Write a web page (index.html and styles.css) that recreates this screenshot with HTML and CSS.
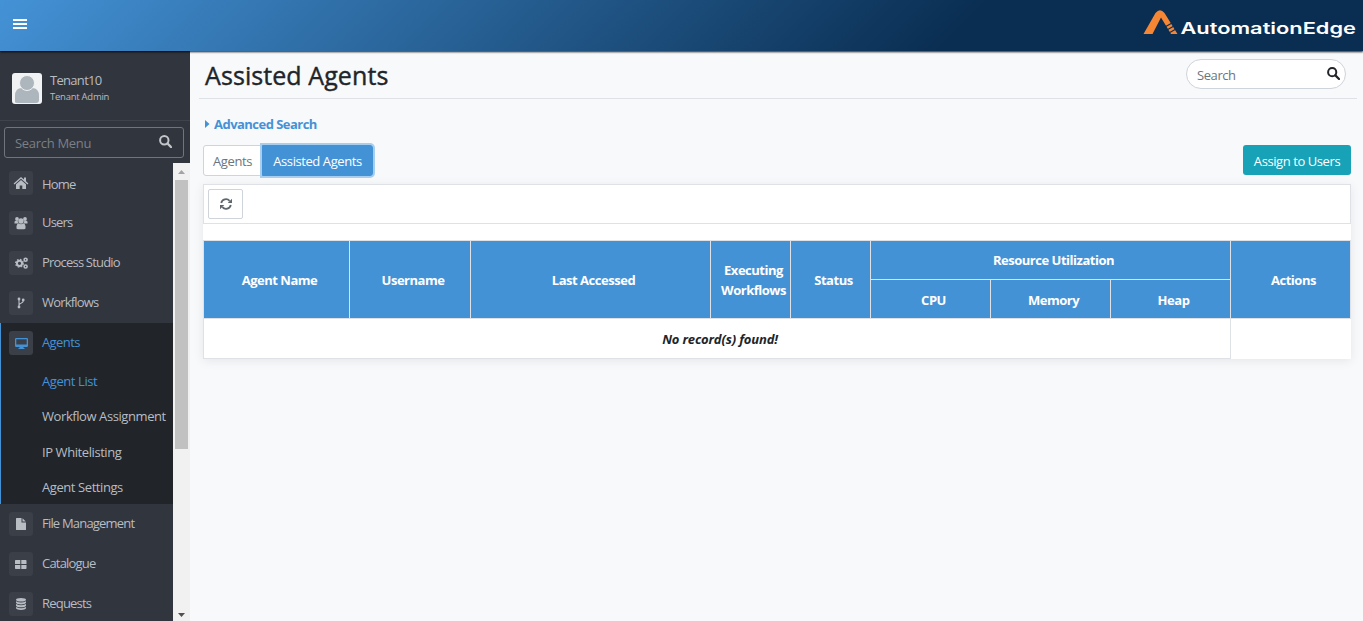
FILE: index.html
```html
<!DOCTYPE html>
<html lang="en">
<head>
    <meta charset="UTF-8">
    <meta name="viewport" content="width=device-width, initial-scale=1.0">
    <title>Assisted Agents</title>
    <link rel="stylesheet" href="styles.css">
</head>
<body>
    <header class="topbar">
        <button class="menu-toggle" aria-label="Toggle menu">
            <svg width="14" height="12" viewBox="0 0 14 12"><path d="M0 1h14v2H0zM0 5h14v2H0zM0 9h14v2H0z" fill="#fff"/></svg>
        </button>
        <svg class="logo" width="216" height="32" viewBox="0 0 216 32">
            <path d="M.500 25 12.500 4Q17-1.500 21.500 4L34.500 25H28L18 8.500 9.500 25Z" fill="#f58634"/>
            <path d="M21 18.500 29 14M23 21.500 31 17M25 24.500 33 20" stroke="#0a2e52" stroke-width="1.100"/>
            <text class="logo-text" x="37.500" y="25" textLength="175.500" lengthAdjust="spacingAndGlyphs">AutomationEdge</text>
        </svg>
    </header>

    <div class="layout">
        <aside class="sidebar">
            <div class="user">
                <svg class="avatar" width="30" height="31" viewBox="0 0 30 31">
                    <rect width="30" height="31" rx="3" fill="#f1f2f3"/>
                    <path d="M3 29V23Q3 15 10 15H20Q27 15 27 23V27Q27 30 24 30H6Q3 30 3 29Z" fill="#adb5bd"/>
                    <circle cx="15" cy="10" r="7.500" fill="#adb5bd" stroke="#f1f2f3"/>
                </svg>
                <div class="user-info">
                    <span class="user-name">Tenant10</span>
                    <span class="user-role">Tenant Admin</span>
                </div>
            </div>
            <div class="menu-search">
                <span>Search Menu</span>
                <svg width="13" height="13" viewBox="0 0 13 13"><circle cx="5.300" cy="5.300" r="4.200" fill="none" stroke="#c3c5c9" stroke-width="2"/><path d="M8.500 8.500 12 12" stroke="#c3c5c9" stroke-width="2.400" stroke-linecap="round"/></svg>
            </div>
            <div class="menu-wrap">
                <ul class="menu">
                    <li><a class="home" href="#"><i class="icon"><svg width="16" height="14" viewBox="0 0 16 14"><path d="M8 1 .600 7.400l.900 1L8 2.800l6.500 5.600.900-1L13 5.300V1.500h-2v2.100z"/><path d="M8 4 3 8.300V13h3.700V9.500h2.600V13H13V8.300z"/></svg></i><span>Home</span></a></li>
                    <li><a class="users" href="#"><i class="icon"><svg width="14" height="14" viewBox="0 0 14 14"><circle cx="3" cy="3" r="1.900"/><circle cx="11" cy="3" r="1.900"/><circle cx="7" cy="5" r="2.700"/><path d="M.500 7.500V5.500Q1.500 4.500 3.800 5 3.800 6.500 4.600 7.500zM13.500 7.500V5.500Q12.500 4.500 10.200 5 10.200 6.500 9.400 7.500zM2.500 12.500V10Q3 7.500 5 7.600 7 9 9 7.600 11 7.500 11.500 10v2.500q-.500.800-1.500.800H4q-1 0-1.500-.800z"/></svg></i><span>Users</span></a></li>
                    <li><a href="#"><i class="icon"><svg width="13" height="12" viewBox="0 0 13 12"><circle cx="4.500" cy="6.300" r="2.600" fill="none" stroke="currentColor" stroke-width="2"/><circle cx="4.500" cy="6.300" r="3.900" fill="none" stroke="currentColor" stroke-width="1.200" stroke-dasharray="1.600 1.463"/><circle cx="10.600" cy="2.700" r="1.500" fill="none" stroke="currentColor" stroke-width="1.600"/><circle cx="10.600" cy="9.500" r="1.500" fill="none" stroke="currentColor" stroke-width="1.600"/></svg></i><span>Process Studio</span></a></li>
                    <li><a href="#"><i class="icon"><svg width="8" height="12" viewBox="0 0 8 12"><path d="M2 2v8M6.300 2.500v1.300Q6.300 5.500 4 6.200 2 6.700 2 8.500" fill="none" stroke="currentColor" stroke-width="1.100"/><circle cx="2" cy="2" r="1.400"/><circle cx="6.200" cy="3" r="1.400"/><circle cx="2" cy="10" r="1.400"/></svg></i><span>Workflows</span></a></li>
                    <li class="active">
                        <a href="#"><i class="icon"><svg width="13" height="11" viewBox="0 0 13 11"><path d="M1.200 0h10.600Q13 0 13 1.200v6.600Q13 9 11.800 9H8.500v1H9.500v1h-6v-1h1V9H1.200Q0 9 0 7.800V1.200Q0 0 1.200 0zM1.300 1.300v5.200h10.400V1.300z" fill-rule="evenodd"/></svg></i><span>Agents</span></a>
                        <ul class="submenu">
                            <li class="current">Agent List</li>
                            <li>Workflow Assignment</li>
                            <li>IP Whitelisting</li>
                            <li>Agent Settings</li>
                        </ul>
                    </li>
                    <li><a href="#"><i class="icon"><svg width="10" height="12" viewBox="0 0 10 12"><path d="M.500 0H5.500V4.500H10V11.500Q10 12 9.500 12H.500Q0 12 0 11.500V.500Q0 0 .500 0zM6.500.200 9.800 3.500H6.500z"/></svg></i><span>File Management</span></a></li>
                    <li><a href="#"><i class="icon"><svg width="12" height="9" viewBox="0 0 12 9"><path d="M.700 0h4.600v4H0V.700Q0 0 .700 0zM6.300 0h4.500Q11.500 0 11.500.700V4H6.300zM0 5h5.300v4H.700Q0 9 0 8.300zM6.300 5h5.200v3.300q0 .700-.700.700H6.300z"/></svg></i><span>Catalogue</span></a></li>
                    <li><a href="#"><i class="icon"><svg width="10" height="12" viewBox="0 0 10 12"><ellipse cx="5" cy="1.800" rx="5" ry="1.800"/><path d="M0 3.200Q5 5.700 10 3.200v1.600Q9 6.500 5 6.500T0 4.800zM0 6.100Q5 8.600 10 6.100v1.600Q9 9.300 5 9.300T0 7.700zM0 9Q5 11.500 10 9v1.300Q9 12 5 12T0 10.300z"/></svg></i><span>Requests</span></a></li>
                </ul>
                <div class="scrollbar">
                    <svg width="7" height="4" viewBox="0 0 7 4"><path d="M0 4 3.500 0 7 4z" fill="#a3a3a3"/></svg>
                    <div class="thumb"></div>
                    <svg width="7" height="4" viewBox="0 0 7 4"><path d="M0 0h7L3.500 4z" fill="#505050"/></svg>
                </div>
            </div>
        </aside>

        <main class="content">
            <div class="page-head">
                <h1>Assisted Agents</h1>
                <div class="search">
                    <span>Search</span>
                    <svg width="13" height="13" viewBox="0 0 13 13"><circle cx="5.200" cy="5.200" r="4.100" fill="none" stroke="#212529" stroke-width="2"/><path d="M8.400 8.400 12 12" stroke="#212529" stroke-width="2.200" stroke-linecap="round"/></svg>
                </div>
            </div>
            <div class="body">
                <a class="advanced" href="#">
                    <svg width="5" height="8" viewBox="0 0 5 8"><path d="M0 0 4.500 4 0 8z" fill="#4492d6"/></svg>
                    <span>Advanced Search</span>
                </a>
                <div class="actions">
                    <div class="tabs">
                        <button class="tab">Agents</button>
                        <button class="tab selected">Assisted Agents</button>
                    </div>
                    <button class="assign">Assign to Users</button>
                </div>
                <div class="card">
                    <div class="toolbar">
                        <button class="refresh" aria-label="Refresh">
                            <svg width="12" height="12" viewBox="0 0 12 12"><path d="M1.200 5A4.900 4.900 0 0 1 9.600 2.800M10.800 7A4.900 4.900 0 0 1 2.400 9.200" fill="none" stroke="#5f676e" stroke-width="1.800"/><path d="M12 .700V5H7.700zM0 11.300V7h4.300z" fill="#5f676e"/></svg>
                        </button>
                    </div>
                    <table>
                        <colgroup>
                            <col class="c-name"><col class="c-user"><col class="c-last"><col class="c-small"><col class="c-small"><col><col><col><col>
                        </colgroup>
                        <thead>
                            <tr>
                                <th rowspan="2">Agent Name</th>
                                <th rowspan="2">Username</th>
                                <th rowspan="2">Last Accessed</th>
                                <th rowspan="2">Executing<br>Workflows</th>
                                <th rowspan="2">Status</th>
                                <th colspan="3">Resource Utilization</th>
                                <th rowspan="2">Actions</th>
                            </tr>
                            <tr class="sub-head">
                                <th>CPU</th>
                                <th>Memory</th>
                                <th>Heap</th>
                            </tr>
                        </thead>
                        <tbody>
                            <tr>
                                <td colspan="8">No record(s) found!</td>
                                <td class="blank"></td>
                            </tr>
                        </tbody>
                    </table>
                </div>
            </div>
        </main>
    </div>
</body>
</html>
```
FILE: styles.css
```css
* {
    margin: 0;
    padding: 0;
    box-sizing: border-box;
}

body {
    height: 100vh;
    overflow: hidden;
    background: #f8f9fb;
    color: #212529;
    font-family: "Open Sans", "Noto Sans", sans-serif;
    font-size: 13px;
    letter-spacing: -0.42px;
}

button {
    font: inherit;
    letter-spacing: inherit;
}

a {
    text-decoration: none;
}

ul {
    list-style: none;
}

svg {
    display: block;
    flex-shrink: 0;
}

/* top bar */
.topbar {
    position: relative;
    z-index: 2;
    display: flex;
    align-items: center;
    justify-content: space-between;
    height: 51px;
    padding: 0 4px 0 13px;
    background: linear-gradient(135deg, #4492d6 0%, #0a2e52 70%);
    box-shadow: 0 1px 2px rgba(0, 0, 0, 0.9);
}

.menu-toggle {
    border: 0;
    background: none;
    padding-bottom: 3px;
}

.logo {
    margin-bottom: 1px;
}

.logo-text {
    font-family: Inter, sans-serif;
    font-size: 16px;
    font-weight: 600;
    letter-spacing: 0;
    fill: #fff;
}

.layout {
    display: flex;
    height: calc(100vh - 51px);
}

/* sidebar */
.sidebar {
    display: flex;
    flex-direction: column;
    flex: 0 0 190px;
    background: #31353d;
    color: #b8bcc3;
}

.user {
    display: flex;
    height: 70px;
    padding: 22px 12px 0;
    border-bottom: 1px solid #3e434c;
}

.user-info {
    display: flex;
    flex-direction: column;
    padding-left: 8px;
}

.user-name {
    line-height: 14px;
    padding-bottom: 2px;
    letter-spacing: -0.7px;
}

.user-role {
    font-size: 9.5px;
    line-height: 16px;
    letter-spacing: -0.25px;
}

.menu-search {
    display: flex;
    align-items: center;
    justify-content: space-between;
    height: 31px;
    margin: 6px 6px 5px 4px;
    padding: 0 11px 0 10px;
    border: 1px solid #70757d;
    border-radius: 3px;
    color: #7b8087;
    letter-spacing: -0.3px;
}

.menu-search svg {
    margin-bottom: 2px;
}

.menu-wrap {
    display: flex;
    flex: 1;
    min-height: 0;
}

.menu {
    width: 173px;
    overflow: hidden;
}

.menu a {
    display: flex;
    align-items: center;
    height: 40px;
    padding-left: 9px;
    color: inherit;
    letter-spacing: -0.8px;
}

.menu a span {
    padding-bottom: 3px;
}

.menu .home span {
    padding: 2px 0 0;
}

.active a span {
    letter-spacing: -0.6px;
}

.icon {
    display: flex;
    align-items: center;
    justify-content: center;
    width: 24px;
    height: 24px;
    margin-right: 9px;
    border-radius: 3px;
    background: #3a3f48;
}

.icon svg {
    fill: currentColor;
}

.active {
    background: #212529;
    box-shadow: inset 1px 0 #4492d6;
}

.active > a {
    color: #4492d6;
}

.submenu li {
    height: 35.25px;
    padding-left: 42px;
    line-height: 36px;
    color: #b8bcc3;
    white-space: nowrap;
}

.submenu .current {
    color: #4492d6;
}

.scrollbar {
    display: flex;
    flex-direction: column;
    align-items: center;
    width: 17px;
    padding: 7px 0 4px;
    background: #f1f1f1;
}

.thumb {
    width: 13px;
    height: 269px;
    margin: 6px 0 auto;
    background: #c1c1c1;
}

/* content */
.content {
    flex: 1;
    padding: 0 6px 0 9px;
}

.page-head {
    display: flex;
    justify-content: space-between;
    height: 48px;
    padding: 8px 11px 0 6px;
    border-bottom: 1px solid #dee2e6;
}

h1 {
    font-size: 25px;
    font-weight: 500;
    line-height: 33px;
    letter-spacing: 0.08px;
    -webkit-text-stroke: 0.4px #212529;
}

.search {
    display: flex;
    align-items: center;
    justify-content: space-between;
    width: 160px;
    height: 30px;
    padding: 0 5px 0 10px;
    border: 1px solid #ced4da;
    border-radius: 15px;
    background: #fff;
    color: #6c757d;
}

.search span {
    padding-top: 2px;
}

.search svg {
    margin-bottom: 2px;
}

.body {
    padding: 17px 6px 0 4px;
}

.advanced {
    display: flex;
    align-items: center;
    gap: 4px;
    height: 16px;
    padding-left: 2px;
    color: #4492d6;
    font-weight: 700;
    letter-spacing: -0.53px;
}

.actions {
    display: flex;
    justify-content: space-between;
    margin-top: 13px;
}

.tabs {
    display: flex;
}

.tab {
    width: 59px;
    height: 31px;
    border: 1px solid #ced4da;
    border-radius: 3px 0 0 3px;
    background: #fff;
    color: #6c757d;
}

.tab.selected {
    width: 111px;
    border-color: #4492d6;
    border-radius: 0 3px 3px 0;
    background: #4492d6;
    box-shadow: 0 0 0 2px #a7cdef;
    color: #fff;
}

.assign {
    width: 108px;
    height: 30px;
    padding-top: 2px;
    border: 0;
    border-radius: 3px;
    background: #17a2b8;
    color: #fff;
}

.card {
    margin-top: 8px;
    background: #fff;
    box-shadow: 0 2px 10px rgba(0, 0, 0, 0.08);
}

.toolbar {
    height: 40px;
    margin-bottom: 16px;
    padding: 4px;
    border: 1px solid #dee2e6;
}

.refresh {
    display: flex;
    align-items: center;
    justify-content: center;
    width: 35px;
    height: 30px;
    border: 1px solid #ced4da;
    border-radius: 2px;
    background: #fff;
}

table {
    width: 100%;
    table-layout: fixed;
    border-collapse: collapse;
}

.c-name {
    width: 146px;
}

.c-user {
    width: 121px;
}

.c-last {
    width: 240px;
}

.c-small {
    width: 80px;
}

th {
    height: 39px;
    padding-left: 6px;
    border: 1px solid #dee2e6;
    background: #4492d6;
    color: #fff;
    font-weight: 700;
    line-height: 20px;
    letter-spacing: -0.48px;
}

.sub-head th {
    padding-top: 2px;
}

td {
    height: 40px;
    padding-left: 6px;
    border: 1px solid #dee2e6;
    font-style: italic;
    font-weight: 700;
    letter-spacing: -0.15px;
    text-align: center;
}

.blank {
    border-right: 0;
    border-bottom: 0;
}
```
